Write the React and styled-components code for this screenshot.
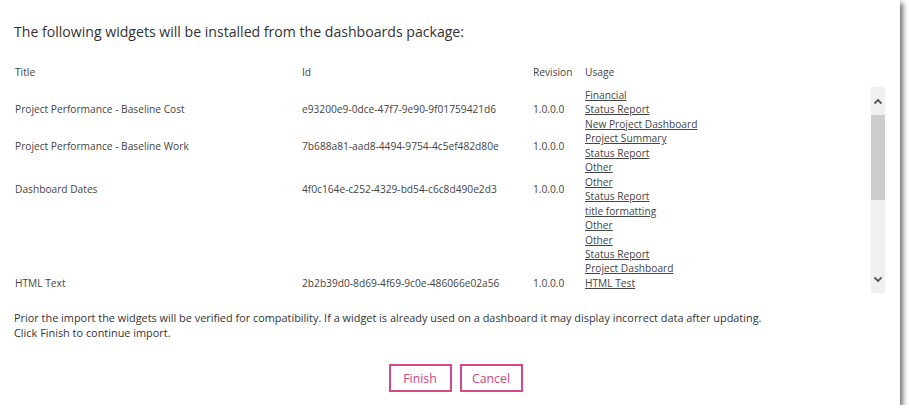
import React from "react";
import styled, { createGlobalStyle } from "styled-components";

const GlobalStyle = createGlobalStyle`
  html, body {
    margin: 0;
    padding: 0;
    background: #fff;
  }
  body {
    font-family: "Open Sans", "Noto Sans", sans-serif;
    color: #444;
  }
`;

// moreBelow: usage lines that sit below the visible part of the list
const widgets = [
  {
    title: "Project Performance - Baseline Cost",
    id: "e93200e9-0dce-47f7-9e90-9f01759421d6",
    revision: "1.0.0.0",
    usage: ["Financial", "Status Report", "New Project Dashboard"],
  },
  {
    title: "Project Performance - Baseline Work",
    id: "7b688a81-aad8-4494-9754-4c5ef482d80e",
    revision: "1.0.0.0",
    usage: ["Project Summary", "Status Report"],
  },
  {
    title: "Dashboard Dates",
    id: "4f0c164e-c252-4329-bd54-c6c8d490e2d3",
    revision: "1.0.0.0",
    usage: ["Other", "Other", "Status Report", "title formatting"],
  },
  {
    title: "HTML Text",
    id: "2b2b39d0-8d69-4f69-9c0e-486066e02a56",
    revision: "1.0.0.0",
    usage: ["Other", "Other", "Status Report", "Project Dashboard", "HTML Test"],
    moreBelow: 4,
  },
];

const LINE = 14.46;

const Chevron = ({ up }) => (
  <svg width="10" height="7" viewBox="0 0 10 7">
    <path
      d={up ? "M1.5 5.5 L5 2 L8.5 5.5" : "M1.5 1.5 L5 5 L8.5 1.5"}
      fill="none"
      stroke="#555"
      strokeWidth="1.8"
    />
  </svg>
);

const App = () => {
  return (
    <>
      <GlobalStyle />
      <Dialog>
        <Heading>The following widgets will be installed from the dashboards package:</Heading>
        <HeaderRow>
          <span>Title</span>
          <span>Id</span>
          <span>Revision</span>
          <span>Usage</span>
        </HeaderRow>
        <ScrollFrame>
          <ScrollContent>
            {widgets.map((w) => (
              <Row key={w.id}>
                <Cell>{w.title}</Cell>
                <Cell>{w.id}</Cell>
                <Cell>{w.revision}</Cell>
                <Usage $below={w.moreBelow || 0}>
                  {w.usage.map((u, i) => (
                    <UsageLink key={i} href="#">
                      {u}
                    </UsageLink>
                  ))}
                </Usage>
              </Row>
            ))}
          </ScrollContent>
          <Scrollbar>
            <ArrowButton>
              <Chevron up />
            </ArrowButton>
            <Track>
              <Thumb />
            </Track>
            <ArrowButton>
              <Chevron />
            </ArrowButton>
          </Scrollbar>
        </ScrollFrame>
        <Note>
          Prior the import the widgets will be verified for compatibility. If a widget is already used on a dashboard it may display incorrect data after updating.
          <br />
          Click Finish to continue import.
        </Note>
        <Buttons>
          <Button>Finish</Button>
          <Button>Cancel</Button>
        </Buttons>
      </Dialog>
    </>
  );
};

const Dialog = styled.div`
  width: 900px;
  height: 405px;
  box-sizing: border-box;
  background: #fff;
  box-shadow: 3px 3px 5px rgba(0, 0, 0, 0.55);
  display: flex;
  flex-direction: column;
  padding: 0 15px 0 14px;
`;

const Heading = styled.h1`
  margin: 22px 0 0;
  font-size: 14.1px;
  line-height: 20px;
  font-weight: 400;
  color: #333;
`;

const columns = "287px 231px 52px 1fr";

const HeaderRow = styled.div`
  display: grid;
  grid-template-columns: ${columns};
  margin: 23px 0 0 1px;
  font-size: 10.2px;
  line-height: 14px;
  color: #444;
`;

const ScrollFrame = styled.div`
  display: flex;
  margin-top: 8px;
  height: 206px;
`;

const ScrollContent = styled.div`
  flex: 1;
  overflow: hidden;
  padding: 1px 0 0 1px;
`;

const Row = styled.div`
  display: grid;
  grid-template-columns: ${columns};
  align-items: center;
  font-size: 10.2px;
  line-height: ${LINE}px;
  color: #444;
`;

const Cell = styled.div`
  white-space: nowrap;
`;

const Usage = styled.div`
  display: flex;
  flex-direction: column;
  align-items: flex-start;
  padding-bottom: ${(p) => p.$below * LINE}px;
`;

const UsageLink = styled.a`
  color: #444;
  text-decoration: underline;
  text-underline-offset: 1px;
`;

const Scrollbar = styled.div`
  width: 14px;
  display: flex;
  flex-direction: column;
  background: #f0f0f0;
`;

const ArrowButton = styled.div`
  height: 28px;
  display: flex;
  align-items: center;
  justify-content: center;
`;

const Track = styled.div`
  flex: 1;
`;

const Thumb = styled.div`
  height: 85px;
  background: #cdcdcd;
`;

const Note = styled.p`
  margin: 17px 0 0;
  font-size: 10.9px;
  line-height: 15px;
  color: #333;
`;

const Buttons = styled.div`
  display: flex;
  justify-content: center;
  gap: 8px;
  margin-top: 24px;
  padding-left: 12px;
`;

const Button = styled.button`
  height: 28px;
  padding: 0 10px;
  min-width: 63px;
  background: #fff;
  border: 2px solid #d7478a;
  color: #d0447f;
  font-family: "Open Sans", "Noto Sans", sans-serif;
  font-size: 12.3px;
  cursor: pointer;
`;

export default App;
